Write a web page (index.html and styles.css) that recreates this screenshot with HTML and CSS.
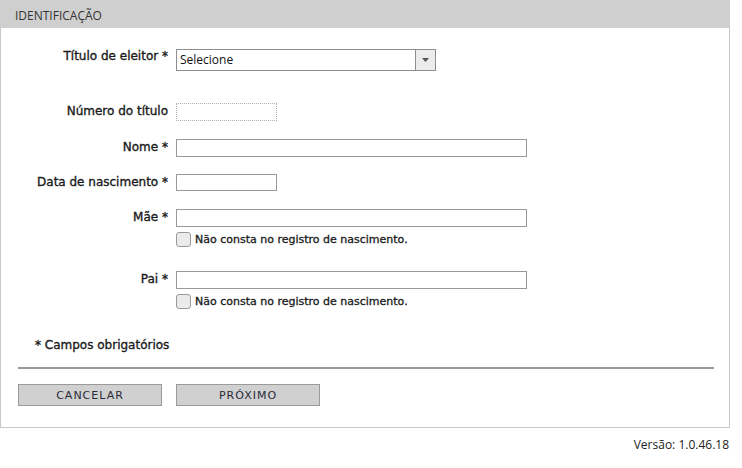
FILE: index.html
```html
<!DOCTYPE html>
<html lang="pt-BR">
<head>
<meta charset="utf-8">
<title>Identificação</title>
<link rel="stylesheet" href="styles.css">
</head>
<body>
<div class="panel">
  <div class="panel-head">IDENTIFICAÇÃO</div>
  <div class="panel-body">
    <div class="row r-select">
      <label class="lbl">Título de eleitor *</label>
      <div class="field">
        <div class="select">
          <span class="select-text">Selecione</span>
          <span class="select-arrow"><svg width="7" height="4" viewBox="0 0 7 4"><path d="M0 0H7L3.5 4Z" fill="#555"/></svg></span>
        </div>
      </div>
    </div>
    <div class="row r-num">
      <label class="lbl">Número do título</label>
      <div class="field"><div class="input short dotted"></div></div>
    </div>
    <div class="row r-nome">
      <label class="lbl">Nome *</label>
      <div class="field"><div class="input long"></div></div>
    </div>
    <div class="row r-data">
      <label class="lbl">Data de nascimento *</label>
      <div class="field"><div class="input short"></div></div>
    </div>
    <div class="row r-mae">
      <label class="lbl">Mãe *</label>
      <div class="field">
        <div class="input long"></div>
        <div class="check"><span class="box"></span><span class="check-text">Não consta no registro de nascimento.</span></div>
      </div>
    </div>
    <div class="row r-pai">
      <label class="lbl">Pai *</label>
      <div class="field">
        <div class="input long"></div>
        <div class="check"><span class="box"></span><span class="check-text">Não consta no registro de nascimento.</span></div>
      </div>
    </div>
    <div class="required">* Campos obrigatórios</div>
    <div class="divider"></div>
    <div class="actions">
      <button class="btn">CANCELAR</button>
      <button class="btn">PRÓXIMO</button>
    </div>
  </div>
</div>
<div class="version">Versão: 1.0.46.18</div>
</body>
</html>
```
FILE: styles.css
```css
html, body {
  margin: 0;
  padding: 0;
  background: #fff;
}
body {
  width: 742px;
  font-family: "DejaVu Sans", Verdana, sans-serif;
  color: #1a1a1a;
}
.panel {
  width: 728px;
  border: 1px solid #c8c8c8;
  border-top: none;
}
.panel-head {
  height: 28px;
  margin: 0 -1px;
  background: #cfcfcf;
  font-family: "Open Sans", sans-serif;
  font-size: 12px;
  color: #333;
  line-height: 31px;
  padding-left: 15px;
}
.panel-body {
  padding: 21px 0 21px 17px;
}
.row {
  display: grid;
  grid-template-columns: 150px 1fr;
  column-gap: 8px;
}
.lbl {
  text-align: right;
  font-size: 12px;
  line-height: 16px;
  -webkit-text-stroke: 0.35px #1a1a1a;
  white-space: nowrap;
}
.field {
  display: flex;
  flex-direction: column;
  align-items: flex-start;
}
.r-select { margin-bottom: 32px; }
.r-select .lbl { margin-top: -1px; }
.r-num { margin-bottom: 18px; }
.r-nome { margin-bottom: 17px; }
.r-data { margin-bottom: 18px; }
.r-mae { margin-bottom: 24px; }
.r-pai { margin-bottom: 28px; }
.select {
  width: 258px;
  height: 20px;
  border: 1px solid #8f8f8f;
  display: flex;
  align-items: stretch;
  background: #fff;
}
.select-text {
  flex: 1;
  font-family: "Open Sans", sans-serif;
  font-size: 12px;
  line-height: 20px;
  padding-left: 3px;
  color: #111;
}
.select-arrow {
  width: 19px;
  border-left: 1px solid #8f8f8f;
  background: #ececec;
  display: flex;
  align-items: center;
  justify-content: center;
}
.input {
  height: 16px;
  border: 1px solid #999;
  background: #fff;
}
.input.long { width: 349px; }
.input.short { width: 99px; }
.input.dotted { border: 1px dotted #b0b0b0; }
.r-data .input { height: 15px; }
.check {
  display: flex;
  align-items: center;
  margin-top: 4px;
  height: 16px;
}
.box {
  width: 13px;
  height: 13px;
  border: 1px solid #999;
  border-radius: 3px;
  background: #ebebeb;
}
.check-text {
  margin-left: 4px;
  font-size: 11px;
  -webkit-text-stroke: 0.3px #1a1a1a;
}
.required {
  font-size: 12px;
  line-height: 16px;
  -webkit-text-stroke: 0.35px #1a1a1a;
  padding-left: 17px;
}
.divider {
  height: 2px;
  width: 696px;
  margin-top: 14px;
  background: #999;
}
.actions {
  display: flex;
  gap: 14px;
  margin-top: 15px;
}
.btn {
  width: 144px;
  height: 22px;
  border: 1px solid #9a9a9a;
  background: #d0d0d0;
  font-family: "DejaVu Sans", Verdana, sans-serif;
  font-size: 11px;
  letter-spacing: 1px;
  color: #2a2a3a;
  padding: 0;
}
.version {
  width: 729px;
  text-align: right;
  font-family: "Open Sans", sans-serif;
  font-size: 12px;
  color: #222;
  margin-top: 8px;
}
```
